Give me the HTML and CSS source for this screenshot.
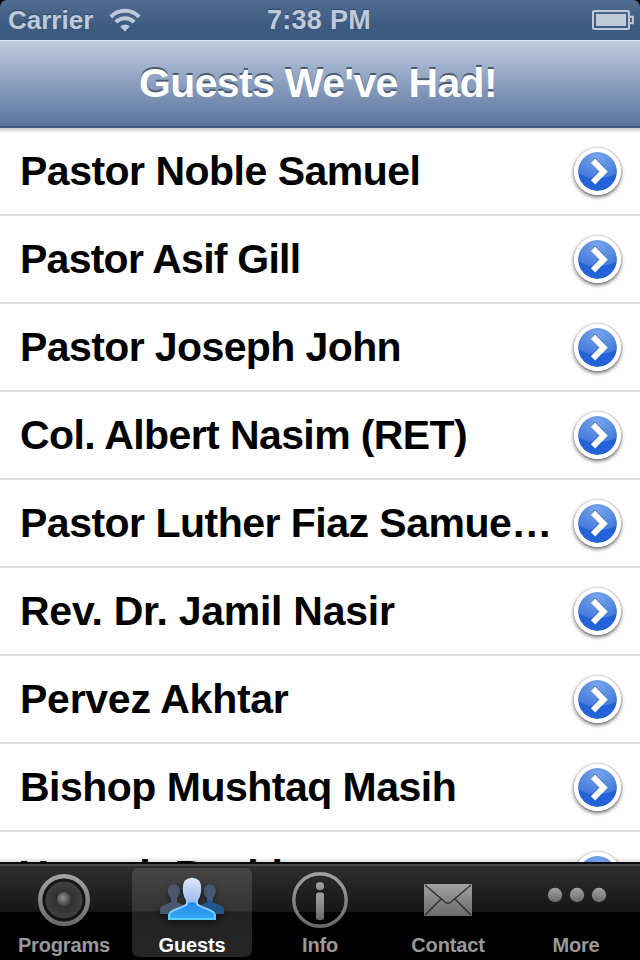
FILE: index.html
```html
<!DOCTYPE html>
<html lang="en">
<head>
<meta charset="utf-8">
<title>Guests</title>
<link rel="stylesheet" href="styles.css">
</head>
<body>
<div class="screen">
  <header class="status">
    <div class="carrier"><span class="carrier-name">Carrier</span>
      <svg class="wifi" width="32" height="24" viewBox="0 0 32 24"><g fill="none" stroke="#bfcad8" stroke-width="4"><path d="M1.8 8.8C9.5.8 22.5.8 30.2 8.8"/><path d="M6.8 14.2C12 8.9 20 8.9 25.2 14.2"/></g><path d="M16 23.4l-4.8-4.8c2.6-2.7 7-2.7 9.6 0z" fill="#bfcad8"/></svg>
    </div>
    <div class="clock">7:38 PM</div>
    <div class="power">
      <svg width="42" height="21" viewBox="0 0 42 21"><rect x="1" y="1" width="36" height="18" rx="1.5" fill="none" stroke="#bfcad8" stroke-width="2"/><rect x="4" y="4" width="30" height="12" fill="#bfcad8"/><path d="M38 6.8h2.9v6.4H38" fill="none" stroke="#bfcad8" stroke-width="2"/></svg>
    </div>
  </header>
  <nav class="navbar"><h1 class="title">Guests We've Had!</h1></nav>
  <main class="content">
    <ul class="list">
      <li class="row"><span class="name">Pastor Noble Samuel</span><span class="disclose"><svg class="chevron" viewBox="0 0 39 39"><path d="M15 8.6l10.6 10.9L15 30.4"/></svg></span></li>
      <li class="row"><span class="name tighter">Pastor Asif Gill</span><span class="disclose"><svg class="chevron" viewBox="0 0 39 39"><path d="M15 8.6l10.6 10.9L15 30.4"/></svg></span></li>
      <li class="row"><span class="name tight">Pastor Joseph John</span><span class="disclose"><svg class="chevron" viewBox="0 0 39 39"><path d="M15 8.6l10.6 10.9L15 30.4"/></svg></span></li>
      <li class="row"><span class="name tight">Col. Albert Nasim (RET)</span><span class="disclose"><svg class="chevron" viewBox="0 0 39 39"><path d="M15 8.6l10.6 10.9L15 30.4"/></svg></span></li>
      <li class="row"><span class="name">Pastor Luther Fiaz Samue…</span><span class="disclose"><svg class="chevron" viewBox="0 0 39 39"><path d="M15 8.6l10.6 10.9L15 30.4"/></svg></span></li>
      <li class="row"><span class="name loose">Rev. Dr. Jamil Nasir</span><span class="disclose"><svg class="chevron" viewBox="0 0 39 39"><path d="M15 8.6l10.6 10.9L15 30.4"/></svg></span></li>
      <li class="row"><span class="name loose">Pervez Akhtar</span><span class="disclose"><svg class="chevron" viewBox="0 0 39 39"><path d="M15 8.6l10.6 10.9L15 30.4"/></svg></span></li>
      <li class="row"><span class="name">Bishop Mushtaq Masih</span><span class="disclose"><svg class="chevron" viewBox="0 0 39 39"><path d="M15 8.6l10.6 10.9L15 30.4"/></svg></span></li>
      <li class="row"><span class="name tighter">Yaqoob Bashir</span><span class="disclose"><svg class="chevron" viewBox="0 0 39 39"><path d="M15 8.6l10.6 10.9L15 30.4"/></svg></span></li>
    </ul>
  </main>
  <footer class="tabs">
    <div class="tab">
      <svg class="icon" width="68" height="62" viewBox="0 0 68 62">
        <defs>
          <linearGradient id="ring" x1="0" y1="0" x2="0" y2="1"><stop offset="0" stop-color="#a2a2a2"/><stop offset="1" stop-color="#6a6a6a"/></linearGradient>
          <radialGradient id="cone"><stop offset="0" stop-color="#292929"/><stop offset=".4" stop-color="#303030"/><stop offset="1" stop-color="#414141"/></radialGradient>
          <radialGradient id="cap" cx=".42" cy=".42"><stop offset="0" stop-color="#929292"/><stop offset="1" stop-color="#484848"/></radialGradient>
        </defs>
        <circle cx="34" cy="31" r="24" fill="#151515"/>
        <circle cx="34" cy="31" r="23.8" fill="none" stroke="url(#ring)" stroke-width="4.4"/>
        <circle cx="34" cy="31" r="18.5" fill="url(#cone)"/>
        <circle cx="34" cy="30" r="7" fill="url(#cap)"/>
      </svg>
      <span class="label">Programs</span>
    </div>
    <div class="tab active">
      <svg class="icon people" width="68" height="62" viewBox="0 0 68 62">
        <defs>
          <linearGradient id="head" x1="0" y1="0" x2="0" y2="1"><stop offset="0" stop-color="#dbe4fa"/><stop offset="1" stop-color="#95b4ec"/></linearGradient>
          <linearGradient id="body" x1="0" y1="0" x2="0" y2="1"><stop offset="0" stop-color="#2586e6"/><stop offset="1" stop-color="#35abfb"/></linearGradient>
          <linearGradient id="edge" gradientUnits="userSpaceOnUse" x1="0" y1="9" x2="0" y2="51"><stop offset="0" stop-color="#dcebff"/><stop offset=".5" stop-color="#9cc8fa"/><stop offset="1" stop-color="#58d0fc"/></linearGradient>
        </defs>
        <path fill="#4b586b" d="M2 45v-6c2-3 8-4 11-6v-4c-4-3-4-10-1-12 2-2 6-2 8 0 3 3 2 9-1 12v4c3 2 7 3 9 6v6z"/>
        <path fill="#475671" d="M49 34v-5c-4-3-4-10-1-12 2-2 6-2 8 0 3 3 2 9-1 12v5z"/>
        <path fill="#24558b" d="M40 45v-6c2-3 6-4 9-6v-2h6v2c3 2 9 3 11 6v6z"/>
        <path fill="url(#head)" d="M29 37v-6c-4-6-4-16-1-19 3-3 9-3 12 0 3 3 3 13-1 19v6z"/>
        <path fill="url(#body)" d="M11 50v-4c1-6 13-6 18-12 3-1 7-1 10 0 5 6 17 6 18 12v4z"/>
        <path fill="none" stroke="url(#edge)" stroke-width="2" d="M11 50v-4c1-6 13-6 18-11v-4c-4-6-4-16-1-19 3-3 9-3 12 0 3 3 3 13-1 19v4c5 5 17 5 18 11v4z"/>
      </svg>
      <span class="label">Guests</span>
    </div>
    <div class="tab">
      <svg class="icon" width="68" height="62" viewBox="0 0 68 62">
        <circle cx="34" cy="31" r="26.2" fill="none" stroke="url(#ring)" stroke-width="3.4"/>
        <circle cx="34" cy="17" r="4.1" fill="#989898"/>
        <rect x="30" y="23.5" width="8" height="27.5" rx="2.5" fill="url(#ring)"/>
      </svg>
      <span class="label">Info</span>
    </div>
    <div class="tab">
      <svg class="icon" width="68" height="62" viewBox="0 0 68 62">
        <path d="M10 15h48v32H10z" fill="url(#ring)"/>
        <path d="M11 16l20 17q3 2.5 6 0l20-17M11 46l16-16M57 46L41 30" fill="none" stroke="#303030" stroke-width="1.5"/>
      </svg>
      <span class="label">Contact</span>
    </div>
    <div class="tab">
      <svg class="icon" width="68" height="62" viewBox="0 0 68 62">
        <g fill="url(#ring)"><circle cx="13" cy="26" r="7.2"/><circle cx="35" cy="26" r="7.2"/><circle cx="57" cy="26" r="7.2"/></g>
      </svg>
      <span class="label">More</span>
    </div>
  </footer>
</div>
</body>
</html>
```
FILE: styles.css
```css
* { box-sizing: border-box; }
body { margin: 0; background: #000; font-family: "Liberation Sans", Arial, sans-serif; font-weight: bold; }
.screen { width: 640px; height: 960px; display: flex; flex-direction: column; overflow: hidden; }
.status { height: 40px; flex: none; display: grid; grid-template-columns: 1fr auto 1fr; align-items: center; padding: 0 6px 0 8px; border-radius: 7px 7px 0 0; background: linear-gradient(#526d91, #3d5a80 65%, #3d5a80); color: #bfcad8; font-size: 26px; line-height: 40px; text-shadow: 0 -1px 1px #304766; }
.carrier { display: flex; align-items: center; gap: 16px; }
.carrier-name, .clock { white-space: nowrap; }
.clock { font-size: 27px; letter-spacing: 0.3px; margin-right: 4px; }
.wifi { margin-top: -1px; }
.power { display: flex; justify-content: flex-end; }
.navbar { height: 88px; flex: none; display: flex; align-items: center; justify-content: center; border-top: 1px solid #e0e7f0; border-bottom: 2px solid #3c587e; background: linear-gradient(#c0ccde, #8a9fbf 50%, #5a759d); }
.title { margin: 0 4px 2px 0; color: #fff; font-size: 41px; line-height: 46px; letter-spacing: -0.65px; text-shadow: 0 -2px 0 #4b5a70; white-space: nowrap; }
.content { height: 734px; flex: none; overflow: hidden; background: linear-gradient(#c9c9c9, #fff 5px, #fff 729px, #ddd); }
.list { margin: 0; padding: 0; list-style: none; }
.row { height: 88px; display: flex; align-items: center; justify-content: space-between; padding: 0 19.5px 0 20px; border-bottom: 2px solid #e0e0e0; }
.name { font-size: 41px; line-height: 46px; letter-spacing: -0.51px; white-space: nowrap; }
.tight { letter-spacing: -0.6px; }
.tighter { letter-spacing: -0.75px; }
.loose { letter-spacing: -0.26px; }
.disclose { width: 47px; height: 47px; flex: none; border: 4px solid #fff; border-radius: 50%; background: radial-gradient(ellipse 30px 22px at 50% 12%, #79a3e8, #447ddd 96%, #2263d8 100%) padding-box; box-shadow: 0 2px 4px rgba(0,0,0,.6), 0 0 2px rgba(0,0,0,.35); }
.chevron { display: block; width: 39px; height: 39px; fill: none; stroke: #fff; stroke-width: 6; filter: drop-shadow(0 -1px 0 rgba(20,60,150,.5)); }
.tabs { height: 98px; flex: none; display: grid; grid-template-columns: repeat(5, 1fr); border-top: 2px solid #0a0a0a; background: linear-gradient(#484848 2px, #2e2e2e 2px, #161616 48px, #000 48px); }
.tab { display: flex; flex-direction: column; align-items: center; margin: 4px; padding-top: 1px; border-radius: 7px; color: #999; }
.active { background: linear-gradient(#464646, #343434 43px, #222 44px, #262626); color: #fff; }
.icon { display: block; flex: none; }
.people { filter: drop-shadow(0 3px 3px rgba(0,0,0,.5)); }
.label { font-size: 20px; line-height: 24px; margin-top: 2px; letter-spacing: -0.15px; }
```
